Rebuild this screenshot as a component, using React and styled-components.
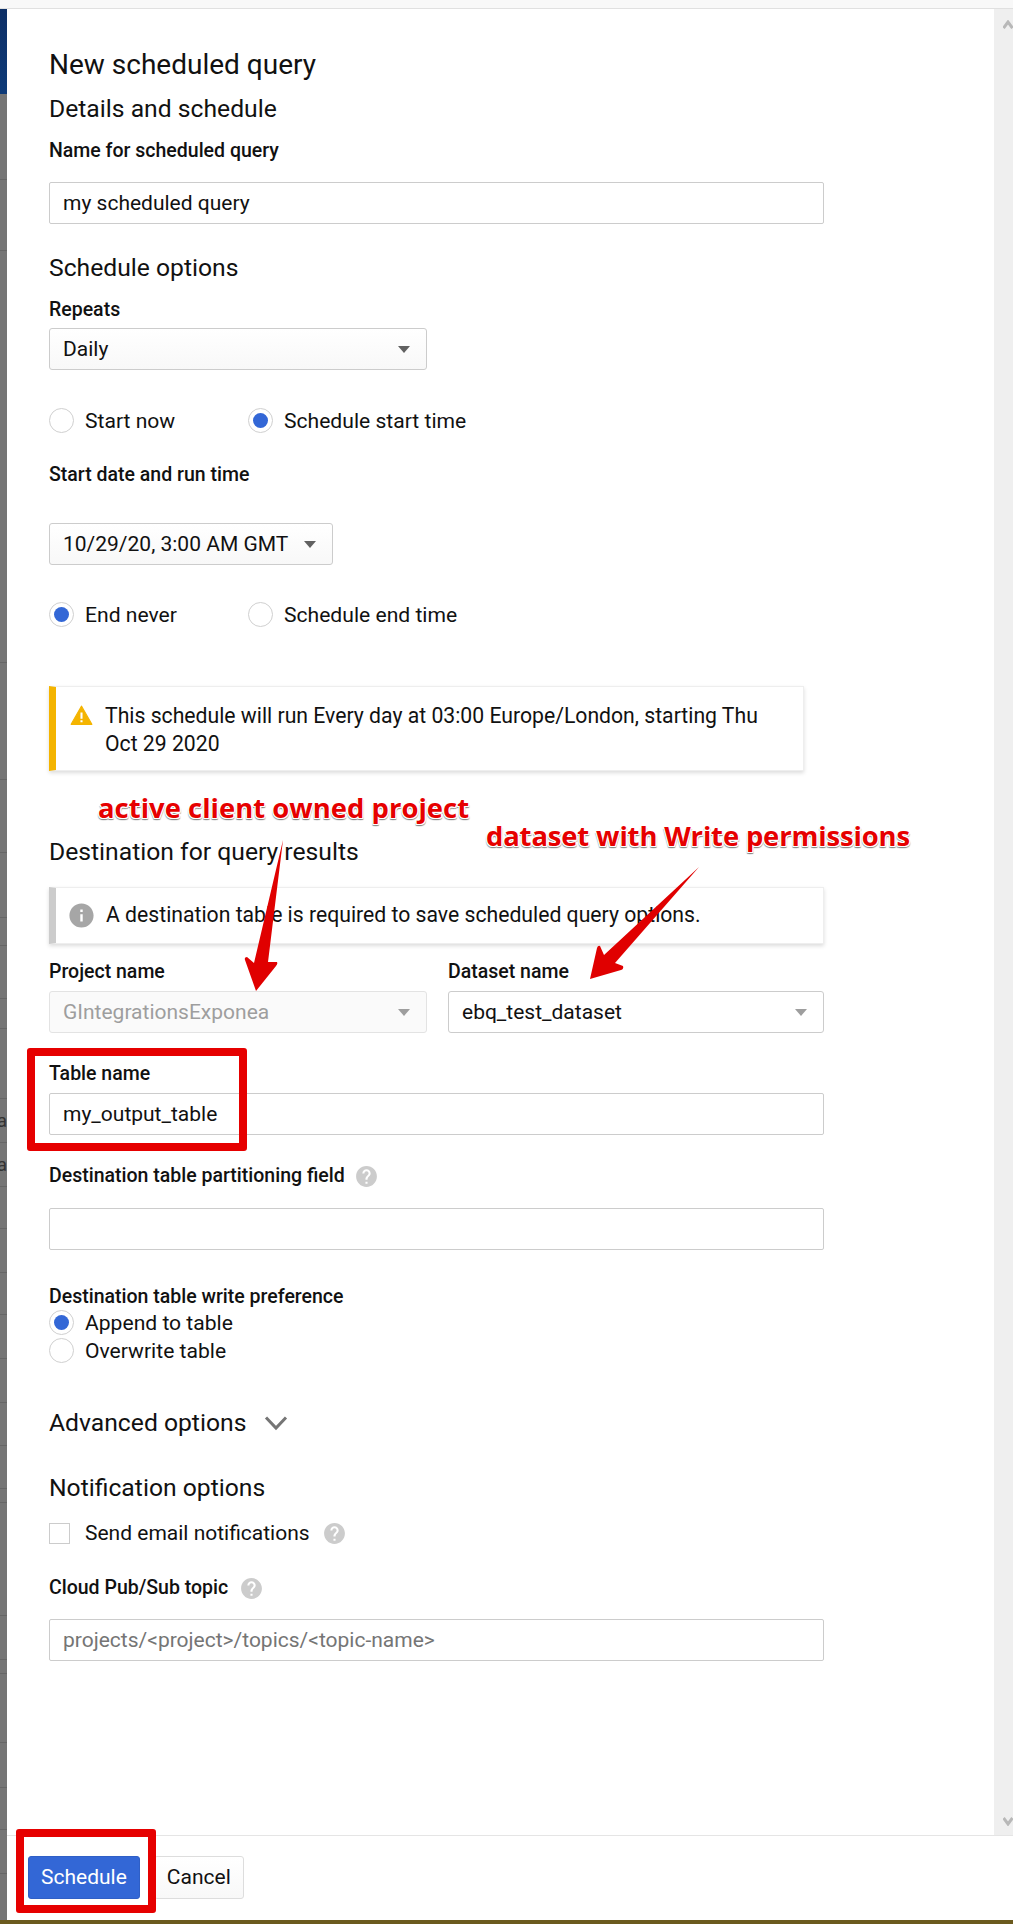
import React from 'react';
import styled, { createGlobalStyle } from 'styled-components';

const GlobalStyle = createGlobalStyle`
    html, body {
        margin: 0;
        padding: 0;
        background: #fff;
    }

    body {
        font-family: Roboto, "Liberation Sans", sans-serif;
        color: #111;
    }
`;

const Page = styled.div`
    position: relative;
    width: 1013px;
    height: 1924px;
    overflow: hidden;
    display: flex;
    flex-direction: column;
    background: #fff;
`;

const TopStrip = styled.div`
    height: 8px;
    flex: none;
    background: #f8f8f8;
    border-bottom: 1px solid #e0e0e0;
`;

const Middle = styled.div`
    flex: 1;
    min-height: 0;
    display: flex;
`;

const Backdrop = styled.div`
    width: 7px;
    flex: none;
    display: flex;
    flex-direction: column;
    overflow: hidden;
    background: #757575;
`;

const BackdropHeader = styled.div`
    height: 85px;
    flex: none;
    background: linear-gradient(#0d2f66, #0e3a78);
`;

const BackdropRow = styled.div`
    height: ${props => props.$h}px;
    flex: none;
    box-sizing: border-box;
    display: flex;
    justify-content: flex-end;
    align-items: center;
    border-bottom: 1px solid #666;
    font-size: 19px;
    color: #333;
    white-space: nowrap;
`;

const Dialog = styled.div`
    flex: 1;
    min-width: 0;
    display: flex;
    flex-direction: column;
`;

const ScrollArea = styled.div`
    flex: 1;
    min-height: 0;
    display: flex;
`;

const Form = styled.div`
    flex: 1;
    min-width: 0;
    padding: 41px 170px 0 42px;
    box-sizing: border-box;
`;

const Scrollbar = styled.div`
    width: 19px;
    flex: none;
    display: flex;
    flex-direction: column;
    justify-content: space-between;
    align-items: flex-end;
    padding: 11px 0 9px;
    box-sizing: border-box;
    background: #efefef;
    color: #b8b8b8;
`;

const Title = styled.h1`
    margin: 0;
    font-size: 28px;
    line-height: 30px;
    font-weight: 400;
`;

const Heading = styled.h2`
    margin: ${props => props.$mt}px 0 0;
    font-size: 24.7px;
    line-height: 28px;
    font-weight: 400;
    display: flex;
    align-items: center;
`;

const Label = styled.div`
    margin-top: ${props => props.$mt}px;
    height: 20px;
    box-sizing: border-box;
    padding-top: 2px;
    font-size: 19.5px;
    line-height: 20px;
    font-weight: 500;
    display: flex;
    align-items: center;
`;

const TextBox = styled.div`
    margin-top: ${props => props.$mt}px;
    height: 42px;
    box-sizing: border-box;
    padding: 0 13px;
    display: flex;
    align-items: center;
    font-size: 21px;
    color: ${props => (props.$placeholder ? '#757575' : '#111')};
    background: #fff;
    border: 1px solid #ccc;
    border-radius: 2px;
`;

const Select = styled.div`
    margin-top: ${props => props.$mt}px;
    width: ${props => props.$width || 'auto'};
    height: 42px;
    box-sizing: border-box;
    padding: 0 16px 0 13px;
    display: flex;
    align-items: center;
    justify-content: space-between;
    font-size: 21px;
    color: ${props => (props.$disabled ? '#9e9e9e' : '#111')};
    background: ${props => (props.$flat ? '#fff' : props.$disabled ? '#fafafa' : 'linear-gradient(#fff, #f8f8f8)')};
    border: 1px solid ${props => (props.$disabled ? '#e3e3e3' : '#ccc')};
    border-radius: 3px;
`;

const Caret = styled.span`
    flex: none;
    width: 0;
    height: 0;
    border-left: 6.5px solid transparent;
    border-right: 6.5px solid transparent;
    border-top: 7px solid ${props => props.$color || '#616161'};
`;

const RadioRow = styled.div`
    margin-top: ${props => props.$mt}px;
    display: flex;
`;

const RadioItem = styled.div`
    height: 24px;
    width: ${props => props.$width || 'auto'};
    display: flex;
    align-items: center;
    gap: 11px;
    font-size: 21.1px;
`;

const RadioDot = styled.span`
    flex: none;
    width: 25px;
    height: 25px;
    box-sizing: border-box;
    border: 1px solid #d0d0d0;
    border-radius: 50%;
    display: flex;
    align-items: center;
    justify-content: center;

    &::after {
        content: "";
        display: ${props => (props.$checked ? 'block' : 'none')};
        width: 15px;
        height: 15px;
        border-radius: 50%;
        background: #3367d6;
    }
`;

const Notice = styled.div`
    margin-top: ${props => props.$mt}px;
    width: ${props => props.$width || 'auto'};
    box-sizing: border-box;
    padding: ${props => props.$padding};
    display: flex;
    gap: ${props => props.$gap}px;
    align-items: flex-start;
    font-size: 21.2px;
    line-height: 28px;
    background: #fff;
    border: 1px solid #eee;
    border-left: 7px solid ${props => props.$accent};
    box-shadow: 0 2px 4px rgba(0, 0, 0, 0.14);
`;

const TwoColumns = styled.div`
    display: grid;
    grid-template-columns: 378px 376px;
    column-gap: 21px;
`;

const CheckRow = styled.div`
    margin-top: ${props => props.$mt}px;
    height: 24px;
    display: flex;
    align-items: center;
    font-size: 21px;
`;

const CheckBox = styled.span`
    flex: none;
    width: 21px;
    height: 21px;
    margin-right: 15px;
    box-sizing: border-box;
    border: 1px solid #ccc;
`;

const HelpIcon = styled.svg`
    flex: none;
    margin-left: ${props => props.$ml}px;
    width: 25px;
    height: 25px;
    fill: #ccc;
`;

const Chevron = styled.svg`
    margin-left: 18px;
    width: 24px;
    height: 16px;
    fill: none;
    stroke: #757575;
    stroke-width: 3;
`;

const Footer = styled.div`
    height: 85px;
    flex: none;
    box-sizing: border-box;
    padding: 20px 0 0 21px;
    display: flex;
    align-items: flex-start;
    gap: 14px;
    border-top: 1px solid #e5e5e5;
`;

const Button = styled.div`
    height: 43px;
    box-sizing: border-box;
    padding: 0 12px 1px;
    display: flex;
    align-items: center;
    font-size: 21px;
    border-radius: 3px;
    color: ${props => (props.$primary ? '#fff' : '#111')};
    background: ${props => (props.$primary ? '#3367d6' : 'linear-gradient(#fff, #f8f8f8)')};
    border: 1px solid ${props => (props.$primary ? '#2f5fc6' : '#ddd')};
`;

const BottomStrip = styled.div`
    height: 4px;
    flex: none;
    background: #6b5a1e;
`;

// annotations pasted over the screenshot
const Annotation = styled.div`
    position: absolute;
    left: ${props => props.$x}px;
    top: ${props => props.$y}px;
    font-family: "Open Sans", "Noto Sans", sans-serif;
    font-size: 27.4px;
    line-height: 36px;
    font-weight: 700;
    letter-spacing: ${props => props.$tracking || 0}px;
    white-space: nowrap;
    color: #e60000;
    text-shadow: 1px 0 0 #fff, -1px 0 0 #fff, 0 1px 0 #fff, 0 -1px 0 #fff,
        1px 1px 0 #fff, -1px 1px 0 #fff, 1px -1px 0 #fff, -1px -1px 0 #fff,
        1px 2px 1px #888, -1px 2px 1px #888;
`;

const RedBox = styled.div`
    position: absolute;
    left: ${props => props.$x}px;
    top: ${props => props.$y}px;
    width: ${props => props.$w}px;
    height: ${props => props.$h}px;
    box-sizing: border-box;
    border: 8px solid #e60000;
    border-radius: 3px;
`;

const ArrowLayer = styled.svg`
    position: absolute;
    left: 0;
    top: 0;
    width: 1013px;
    height: 1924px;
    pointer-events: none;
`;

const backdropRows = [
    { h: 86 }, { h: 71 }, { h: 412 }, { h: 117 }, { h: 73 }, { h: 65 }, { h: 28 }, { h: 53 }, { h: 30 },
    { h: 70 }, { h: 44, text: 'Da' }, { h: 44, text: 'Da' }, { h: 42 }, { h: 44 }, { h: 42 },
    { h: 44 }, { h: 44 }, { h: 43 }, { h: 43 }, { h: 14 }, { h: 113 }, { h: 44 }, { h: 14 }, { h: 69 },
    { h: 45 }, { h: 42 }, { h: 44 }, { h: 47 },
];

const helpPath = 'M12 2C6.48 2 2 6.48 2 12s4.48 10 10 10 10-4.48 10-10S17.52 2 12 2zm1 17h-2v-2h2v2zm2.07-7.75l-.9.92C13.45 12.9 13 13.5 13 15h-2v-.5c0-1.1.45-2.1 1.17-2.83l1.24-1.26c.37-.36.59-.86.59-1.41 0-1.1-.9-2-2-2s-2 .9-2 2H8c0-2.21 1.79-4 4-4s4 1.79 4 4c0 .88-.36 1.68-.93 2.25z';

const Help = ({ ml }) => (
    <HelpIcon $ml={ml} viewBox="0 0 24 24"><path d={helpPath} /></HelpIcon>
);

const Radio = ({ checked, width, children }) => (
    <RadioItem $width={width}>
        <RadioDot $checked={checked} />
        {children}
    </RadioItem>
);

const App = () => {
    return (
        <Page>
            <GlobalStyle />
            <TopStrip />
            <Middle>
                <Backdrop>
                    <BackdropHeader />
                    {backdropRows.map((row, i) => (
                        <BackdropRow key={i} $h={row.h}>{row.text}</BackdropRow>
                    ))}
                </Backdrop>
                <Dialog>
                    <ScrollArea>
                        <Form>
                            <Title>New scheduled query</Title>
                            <Heading $mt={15}>Details and schedule</Heading>
                            <Label $mt={17}>Name for scheduled query</Label>
                            <TextBox $mt={22}>my scheduled query</TextBox>

                            <Heading $mt={30}>Schedule options</Heading>
                            <Label $mt={17}>Repeats</Label>
                            <Select $mt={9} $width="378px">Daily<Caret /></Select>
                            <RadioRow $mt={38}>
                                <Radio width="199px">Start now</Radio>
                                <Radio checked>Schedule start time</Radio>
                            </RadioRow>
                            <Label $mt={32}>Start date and run time</Label>
                            <Select $mt={39} $width="284px">10/29/20, 3:00 AM GMT<Caret /></Select>
                            <RadioRow $mt={37}>
                                <Radio checked width="199px">End never</Radio>
                                <Radio>Schedule end time</Radio>
                            </RadioRow>

                            <Notice $mt={60} $width="755px" $padding="15px 30px 12px 13px" $gap={11} $accent="#f4b400">
                                <svg width="25" height="25" viewBox="0 0 24 24" fill="#f4b400" stroke="#f4b400" strokeLinejoin="round" style={{ flex: 'none', marginTop: 1 }}>
                                    <path d="M2 20.5h20L12 3z" />
                                    <path d="M11 9h2v6h-2zM11 16.5h2v2h-2z" fill="#fff" stroke="none" />
                                </svg>
                                <span>This schedule will run Every day at 03:00 Europe/London, starting Thu Oct 29 2020</span>
                            </Notice>

                            <Heading $mt={67}>Destination for query results</Heading>
                            <Notice $mt={21} $padding="13px 10px 13px 11px" $gap={10} $accent="#ccc">
                                <svg width="29" height="29" viewBox="0 0 24 24" fill="#a6a6a6" style={{ flex: 'none' }}>
                                    <path d="M12 2C6.48 2 2 6.48 2 12s4.48 10 10 10 10-4.48 10-10S17.52 2 12 2zm1 15h-2v-6h2v6zm0-8h-2V7h2v2z" />
                                </svg>
                                <span>A destination table is required to save scheduled query options.</span>
                            </Notice>
                            <TwoColumns>
                                <div>
                                    <Label $mt={17}>Project name</Label>
                                    <Select $mt={10} $disabled>GIntegrationsExponea<Caret $color="#9e9e9e" /></Select>
                                </div>
                                <div>
                                    <Label $mt={17}>Dataset name</Label>
                                    <Select $mt={10} $flat>ebq_test_dataset<Caret $color="#9e9e9e" /></Select>
                                </div>
                            </TwoColumns>
                            <Label $mt={30}>Table name</Label>
                            <TextBox $mt={10}>my_output_table</TextBox>
                            <Label $mt={30}>Destination table partitioning field<Help ml={9} /></Label>
                            <TextBox $mt={23} />
                            <Label $mt={36}>Destination table write preference</Label>
                            <RadioRow $mt={4}><Radio checked>Append to table</Radio></RadioRow>
                            <RadioRow $mt={4}><Radio>Overwrite table</Radio></RadioRow>

                            <Heading $mt={47}>
                                Advanced options
                                <Chevron viewBox="0 0 24 16"><path d="M2 2.5 12 13 22 2.5" /></Chevron>
                            </Heading>
                            <Heading $mt={37}>Notification options</Heading>
                            <CheckRow $mt={19}>
                                <CheckBox />
                                Send email notifications
                                <Help ml={12} />
                            </CheckRow>
                            <Label $mt={32}>Cloud Pub/Sub topic<Help ml={11} /></Label>
                            <TextBox $mt={22} $placeholder>{'projects/<project>/topics/<topic-name>'}</TextBox>
                        </Form>
                        <Scrollbar>
                            <svg width="10" height="9" viewBox="0 0 10 9" fill="none" stroke="currentColor" strokeWidth="3"><path d="M0.5 8 5 2l4.5 6" /></svg>
                            <svg width="10" height="9" viewBox="0 0 10 9" fill="none" stroke="currentColor" strokeWidth="3"><path d="M0.5 1 5 7l4.5-6" /></svg>
                        </Scrollbar>
                    </ScrollArea>
                    <Footer>
                        <Button $primary>Schedule</Button>
                        <Button>Cancel</Button>
                    </Footer>
                </Dialog>
            </Middle>
            <BottomStrip />

            <ArrowLayer viewBox="0 0 1013 1924">
                <path d="M283 840 L268 962 L277 962 Q278 964 276 966 L256 991 L245 960 Q244 957 247 957 L254 963 Z" fill="#e00000" />
                <path d="M699 867 L615 963 L623 966 Q624 969 621 970 L590 979 L597 948 Q598 945 600 946 L604 955 Z" fill="#e00000" />
            </ArrowLayer>
            <Annotation $x={98} $y={790} $tracking={0.04}>active client owned project</Annotation>
            <Annotation $x={486} $y={818} $tracking={-0.13}>dataset with Write permissions</Annotation>
            <RedBox $x={27} $y={1048} $w={220} $h={103} />
            <RedBox $x={16} $y={1829} $w={140} $h={84} />
        </Page>
    );
};

export default App;
